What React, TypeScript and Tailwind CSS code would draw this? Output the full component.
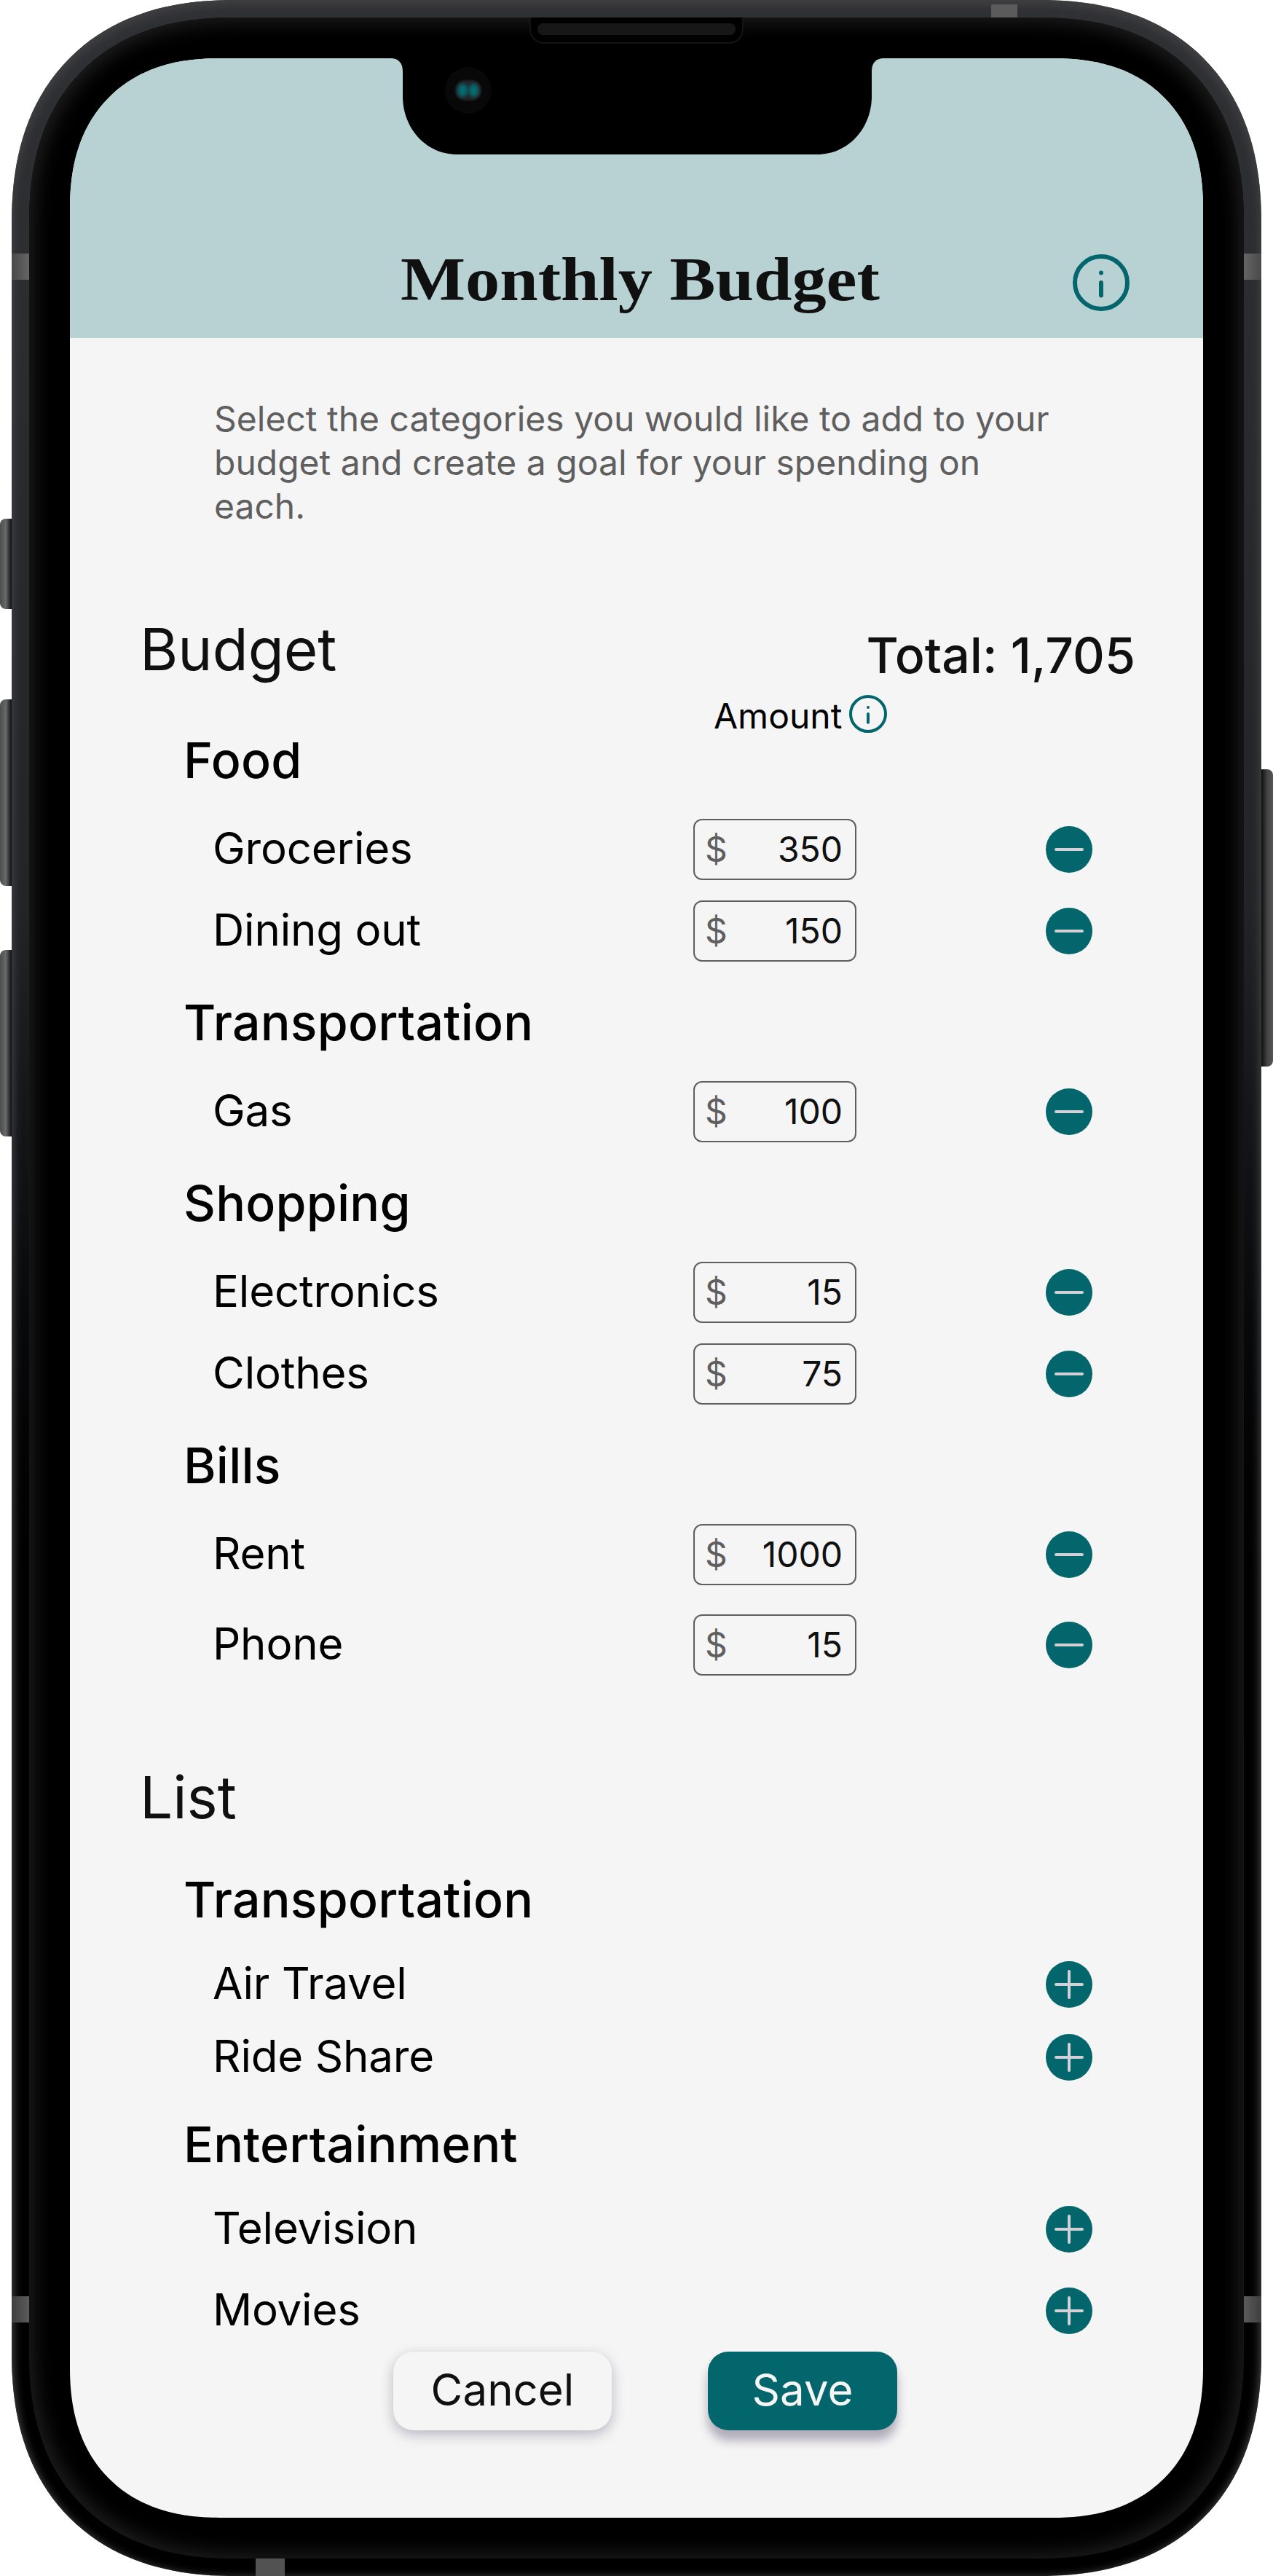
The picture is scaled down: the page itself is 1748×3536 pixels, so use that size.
import React from 'react';

interface BudgetItem {
  name: string;
  amount?: number;
  className: string;
}

interface BudgetGroup {
  title: string;
  className: string;
  items: BudgetItem[];
}

const budgetGroups: BudgetGroup[] = [
  {
    title: 'Food',
    className: 'mt-0',
    items: [
      { name: 'Groceries', amount: 350, className: 'mt-[41px]' },
      { name: 'Dining out', amount: 150, className: 'mt-[28px]' },
    ],
  },
  {
    title: 'Transportation',
    className: 'mt-[43px]',
    items: [{ name: 'Gas', amount: 100, className: 'mt-[41px]' }],
  },
  {
    title: 'Shopping',
    className: 'mt-[43px]',
    items: [
      { name: 'Electronics', amount: 15, className: 'mt-[41px]' },
      { name: 'Clothes', amount: 75, className: 'mt-[28px]' },
    ],
  },
  {
    title: 'Bills',
    className: 'mt-[43px]',
    items: [
      { name: 'Rent', amount: 1000, className: 'mt-[41px]' },
      { name: 'Phone', amount: 15, className: 'mt-[40px]' },
    ],
  },
];

const listGroups: BudgetGroup[] = [
  {
    title: 'Transportation',
    className: 'mt-[50px]',
    items: [
      { name: 'Air Travel', className: 'mt-[35px]' },
      { name: 'Ride Share', className: 'mt-[16px]' },
    ],
  },
  {
    title: 'Entertainment',
    className: 'mt-[37px]',
    items: [
      { name: 'Television', className: 'mt-[35px]' },
      { name: 'Movies', className: 'mt-[28px]' },
    ],
  },
];

const InfoIcon: React.FC<{ className: string }> = ({ className }) => (
  <svg className={className} viewBox="0 0 78 78" fill="none" stroke="currentColor" strokeWidth={6} strokeLinecap="round">
    <circle cx="39" cy="39" r="36" />
    <path d="M39 39v17.5M39 25.5v.01" />
  </svg>
);

const ToggleIcon: React.FC<{ plus: boolean }> = ({ plus }) => (
  <svg className="h-16 w-16" viewBox="0 0 64 64" fill="none">
    <circle cx="32" cy="32" r="32" fill="#03666c" />
    <path d={plus ? 'M14 32h36M32 14v36' : 'M14 32h36'} stroke="#d2d1d8" strokeWidth={4} strokeLinecap="round" />
  </svg>
);

const ItemRow: React.FC<{ item: BudgetItem }> = ({ item }) => (
  <div className={`flex h-[84px] items-center pl-[100px] ${item.className}`}>
    <span className="mb-[4px] w-[660px] text-[60px] leading-[84px] tracking-[-0.2px]">{item.name}</span>
    <div className="w-[224px]">
      {item.amount !== undefined && (
        <div className="flex h-[84px] items-center justify-between rounded-[12px] border-2 border-[#5f5f5f] pl-[14px] pr-[17px] text-[48px] leading-[80px]">
          <span className="text-[#5f5f5f]">$</span>
          <span className="text-[#101010]">{item.amount}</span>
        </div>
      )}
    </div>
    <button className="ml-[260px]">
      <ToggleIcon plus={item.amount === undefined} />
    </button>
  </div>
);

const Group: React.FC<{ group: BudgetGroup }> = ({ group }) => (
  <section className={group.className}>
    <h3 className="pl-[60px] text-[68px] font-medium leading-[80px] tracking-[0.2px]">{group.title}</h3>
    {group.items.map((item) => (
      <ItemRow key={item.name} item={item} />
    ))}
  </section>
);

/* Physical buttons, antenna bands, speaker and notch */
const PhoneHardware: React.FC = () => (
  <>
    <div className="absolute left-0 top-[712px] h-[124px] w-4 rounded-l-[8px] bg-linear-to-r from-[#4b4c4c] via-[#686969] to-[#101010]" />
    <div className="absolute left-0 top-[960px] h-[256px] w-4 rounded-l-[8px] bg-linear-to-r from-[#4b4c4c] via-[#686969] to-[#101010]" />
    <div className="absolute left-0 top-[1304px] h-[256px] w-4 rounded-l-[8px] bg-linear-to-r from-[#4b4c4c] via-[#686969] to-[#101010]" />
    <div className="absolute right-0 top-[1056px] h-[408px] w-4 rounded-r-[8px] bg-linear-to-r from-[#101010] via-[#434344] to-[#555555]" />
    <div className="absolute left-4 top-[348px] h-9 w-6 bg-linear-to-r from-[#4a4a4a] to-[#666464]" />
    <div className="absolute right-4 top-[348px] h-9 w-6 bg-linear-to-l from-[#4a4a4a] to-[#666464]" />
    <div className="absolute left-4 top-[3152px] h-9 w-6 bg-linear-to-r from-[#3e3e40] to-[#5c5c5c]" />
    <div className="absolute right-4 top-[3152px] h-9 w-6 bg-linear-to-l from-[#3e3e40] to-[#5c5c5c]" />
    <div className="absolute left-[1361px] top-[6px] h-[18px] w-9 bg-[#5c5b5b]" />
    <div className="absolute left-[351px] top-[3512px] h-6 w-10 bg-[#525253]" />
    <svg className="absolute left-[536px] top-[78px] h-[136px] w-[678px]" viewBox="0 0 678 136">
      <path d="M0 0V2C12 2 17 9 17 20V54C17 98 49 134 92 134H586C629 134 661 98 661 54V20C661 9 666 2 678 2V0Z" fill="#000" />
    </svg>
    <div className="absolute left-[727px] top-[24px] h-9 w-[294px] rounded-b-[20px] border-2 border-t-0 border-[#131313] bg-black" />
    <div className="absolute left-[738px] top-[32px] h-4 w-[272px] rounded-full bg-[#171717]" />
    <div className="absolute left-[611px] top-[92px] flex h-[64px] w-[64px] items-center justify-center rounded-full bg-[#080808]">
      <div className="flex h-7 w-9 items-center justify-center gap-[2px] rounded-full bg-[#222226] blur-[1px]">
        <span className="h-[18px] w-[13px] rounded-full bg-[#066b70] blur-[2px]" />
        <span className="h-[18px] w-[13px] rounded-full bg-[#066b70] blur-[2px]" />
      </div>
    </div>
  </>
);

const App: React.FC = () => {
  return (
    <div className="relative h-[3536px] w-[1748px] bg-white px-4 font-['Inter',sans-serif] text-black">
      <div className="h-[3536px] rounded-[306px] bg-linear-to-b from-[#303135] from-0% via-[#222428] via-35% to-black to-70% p-6 shadow-[inset_0_4px_12px_3px_#404042] [corner-shape:superellipse(1.2)]">
        <div className="h-[3488px] rounded-[280px] bg-black px-14 py-14 shadow-[inset_0_0_24px_8px_#1c1c1c] [corner-shape:superellipse(1.2)]">
          <main className="flex h-[3376px] flex-col overflow-hidden rounded-[206px] bg-[#f5f5f5] [corner-shape:superellipse(1.2)]">
            <header className="flex h-[384px] shrink-0 items-start justify-between bg-[#b8d2d4] pl-[454px] pr-[101px] pt-[269px]">
              <h1 className="-mt-4 origin-left scale-x-[1.11] whitespace-nowrap font-['Liberation_Serif',serif] text-[85px] font-bold leading-[100px] text-[#101010]">
                Monthly Budget
              </h1>
              <InfoIcon className="h-[78px] w-[78px] text-[#03666c]" />
            </header>

            <p className="ml-[198px] mt-[81px] w-[1180px] text-[48px] leading-[60px] text-[#5f5f5f]">
              Select the categories you would like to add to your budget and create a goal for your spending on each.
            </p>

            <div className="ml-24 mt-[116px] flex h-[100px] justify-between pr-[93px] text-[#101010]">
              <h2 className="text-[80px] leading-[100px]">Budget</h2>
              <p className="mt-[8px] text-[68px] font-medium leading-[100px]">Total: 1,705</p>
            </div>
            <div className="ml-[884px] mt-[13px] flex h-[52px] items-center gap-[10px]">
              <span className="mt-[5px] text-[48px] leading-[52px]">Amount</span>
              <InfoIcon className="h-[52px] w-[52px] text-[#03666c]" />
            </div>

            <div className="-mt-[3px] ml-24">
              {budgetGroups.map((group) => (
                <Group key={group.title} group={group} />
              ))}
              <h2 className="mt-[117px] text-[80px] leading-[100px] text-[#101010]">List</h2>
              {listGroups.map((group) => (
                <Group key={group.title} group={group} />
              ))}
            </div>

            <div className="ml-[444px] mt-[14px] flex gap-[132px] text-[60px]">
              <button className="h-[108px] w-[300px] rounded-[28px] bg-[#f5f5f5] pb-[4px] text-[#101010] shadow-[0_6px_18px_rgba(30,20,60,0.28)]">
                Cancel
              </button>
              <button className="h-[108px] w-[260px] rounded-[28px] bg-[#03666c] pb-[4px] text-[#f5f5f5] shadow-[0_14px_14px_rgba(30,20,60,0.32)]">
                Save
              </button>
            </div>
          </main>
        </div>
      </div>
      <PhoneHardware />
    </div>
  );
};

export default App;
